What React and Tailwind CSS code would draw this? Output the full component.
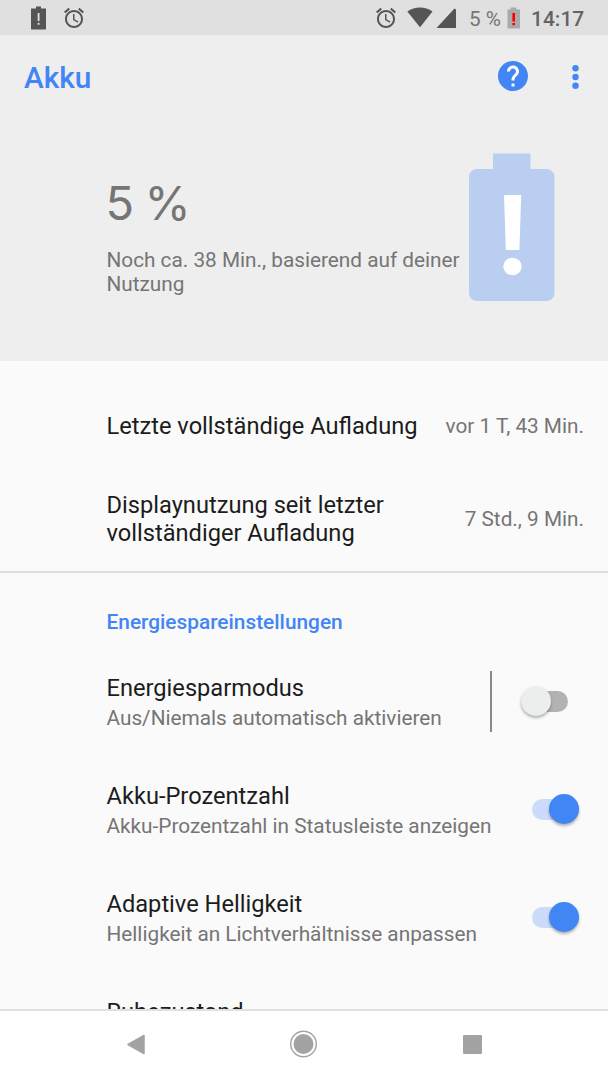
import React, { useState } from "react";

const AlarmIcon = () => (
  <svg className="size-6 shrink-0" viewBox="0 0 24 24" fill="#555555">
    <path d="M22 5.72l-4.6-3.86-1.29 1.53 4.6 3.86L22 5.72zM7.88 3.39L6.6 1.86 2 5.71l1.29 1.53 4.59-3.85zM12.5 8H11v6l4.75 2.85.75-1.23-4-2.37V8zM12 4c-4.97 0-9 4.03-9 9s4.02 9 9 9c4.97 0 9-4.03 9-9s-4.03-9-9-9zm0 16c-3.87 0-7-3.13-7-7s3.13-7 7-7 7 3.13 7 7-3.13 7-7 7z" />
  </svg>
);

function StatusBar() {
  return (
    <div className="h-[35px] shrink-0 bg-[#e0e0e0] flex items-center pl-[31px] pr-6">
      <svg className="w-[15px] h-6 shrink-0" viewBox="0 0 15 24">
        <path d="M5 0.5h5v2h5v21H0v-21h5z" fill="#555555" />
        <path d="M6.7 7h1.8v8H6.7zM6.7 16.8h1.8v2H6.7z" fill="#e0e0e0" />
      </svg>
      <div className="ml-4 flex">
        <AlarmIcon />
      </div>
      <div className="ml-auto flex items-center">
        <AlarmIcon />
        <svg className="ml-[9px] w-[26px] h-[21px]" viewBox="0 0 26 21">
          <path d="M0.3 4.6C7.5-1 18.5-1 25.5 4.6L13 20.3z" fill="#555555" />
        </svg>
        <svg className="ml-[3px] w-5 h-5" viewBox="0 0 20 20">
          <path d="M18.5 0.6L20 1.5V20H0.5z" fill="#555555" />
        </svg>
        <span className="ml-[13px] w-[33px] whitespace-nowrap text-[20.7px] leading-6 text-[#757575] mt-0.5">
          5 %
        </span>
        <svg className="ml-[5px] w-[13px] h-[22px]" viewBox="0 0 13 22">
          <path d="M3.5 0.5h6v2H13v19H0.5v-19h3z" fill="#aaaaaa" />
          <path d="M5.4 6h2.6v8.5H5.4zM5.4 15.9h2.6v2.4H5.4z" fill="#ff0000" />
        </svg>
        <span className="ml-[11px] w-[53px] whitespace-nowrap text-[21px] leading-6 font-medium text-[#636363] mt-0.5">
          14:17
        </span>
      </div>
    </div>
  );
}

function AppBar() {
  return (
    <div className="h-[85px] flex items-center pl-6 pr-[29px]">
      <h1 className="text-[29.8px] leading-[35px] font-medium text-[#4285f4] -mt-px">Akku</h1>
      <button className="ml-auto" aria-label="Hilfe">
        <svg className="block size-9 -mt-[3px]" viewBox="0 0 24 24" fill="#4285f4">
          <circle cx="12" cy="12" r="9" fill="#ffffff" />
          <path d="M12 2C6.48 2 2 6.48 2 12s4.48 10 10 10 10-4.48 10-10S17.52 2 12 2zm1 17h-2v-2h2v2zm2.07-7.75l-.9.92C13.45 12.9 13 13.5 13 15h-2v-.5c0-1.1.45-2.1 1.17-2.83l1.24-1.26c.37-.36.59-.86.59-1.41 0-1.1-.9-2-2-2s-2 .9-2 2H8c0-2.21 1.79-4 4-4s4 1.79 4 4c0 .88-.36 1.68-.93 2.25z" />
        </svg>
      </button>
      <button className="ml-[41px]" aria-label="Mehr">
        <svg className="block w-[7px] h-6 -mt-px" viewBox="0 0 7 24" fill="#4285f4">
          <circle cx="3.5" cy="3.2" r="3.2" />
          <circle cx="3.5" cy="12" r="3.2" />
          <circle cx="3.5" cy="20.8" r="3.2" />
        </svg>
      </button>
    </div>
  );
}

function BatterySummary() {
  return (
    <div className="h-[241px] flex pl-[106.5px] text-[#757575]">
      <div className="w-[361.5px] pt-[55px]">
        <p className="font-[Inter,sans-serif] text-[47px] leading-[56px] tracking-[-1.4px] -ml-px">5 %</p>
        <p className="mt-[17px] text-[20.78px] leading-[24.3px]">
          Noch ca. 38 Min., basierend auf deiner Nutzung
        </p>
      </div>
      <svg className="mt-[33px] w-[87px] h-[149px]" viewBox="0 0 87 149">
        <path
          d="M25 0.5h37.5v15.5H78.5a8 8 0 0 1 8 8V140a8 8 0 0 1-8 8H9a8 8 0 0 1-8-8V24a8 8 0 0 1 8-8H25z"
          fill="#b9cef0"
        />
        <path d="M36 42h17.2l-1.8 55H37.8z" fill="#ffffff" />
        <ellipse cx="44.5" cy="113.5" rx="9.2" ry="8.7" fill="#ffffff" />
      </svg>
    </div>
  );
}

function InfoRow({ title, value, className }) {
  return (
    <div className={`flex items-center justify-between pl-[106.5px] pr-6 ${className}`}>
      <p className="max-w-[320px] pt-0.5 text-[23.65px] leading-[27.7px] text-[#1c1c1c]">{title}</p>
      <p className="whitespace-nowrap text-[20.78px] leading-[24.3px] text-[#757575]">{value}</p>
    </div>
  );
}

function Switch({ checked, onClick }) {
  return (
    <button
      role="switch"
      aria-checked={checked}
      onClick={onClick}
      className={`flex items-center w-[47px] h-[21px] -mt-px rounded-full ${
        checked ? "justify-end bg-[#cbdbf9]" : "bg-[#b2b2b2]"
      }`}
    >
      <span
        className={`size-[30px] shrink-0 rounded-full shadow-[0_2px_3px_rgba(0,0,0,0.3)] ${
          checked ? "bg-[#4285f4]" : "bg-[#eceeed]"
        }`}
      />
    </button>
  );
}

function SettingRow({ item, onToggle }) {
  return (
    <div className="h-[108px] shrink-0 flex items-center pl-[106.5px]">
      <div className="whitespace-nowrap">
        <p className="pt-px text-[23.65px] leading-[27.7px] text-[#1c1c1c]">{item.title}</p>
        <p className="mt-[3.5px] text-[20.78px] leading-[24.3px] text-[#757575]">{item.summary}</p>
      </div>
      <div className={`ml-auto -mt-px flex items-center ${item.divided ? "pr-[40.5px]" : "pr-[29px]"}`}>
        {item.divided && <div className="w-[1.5px] h-[61px] mr-[29px] bg-[#8a8a8a]" />}
        {item.hasSwitch && <Switch checked={item.checked} onClick={onToggle} />}
      </div>
    </div>
  );
}

function NavBar() {
  return (
    <div className="h-[71px] shrink-0 flex items-center justify-between border-t-2 border-[#e0e0e0] bg-white pl-[126px] pr-[126.5px] pb-[3px]">
      <svg className="w-5 h-[21px]" viewBox="0 0 20 21">
        <path d="M18 1.5v18L2 10.5z" fill="#a3a3a3" stroke="#a3a3a3" strokeWidth="1.5" strokeLinejoin="round" />
      </svg>
      <svg className="size-7" viewBox="0 0 28 28">
        <circle cx="13.5" cy="14" r="12.8" fill="none" stroke="#a3a3a3" strokeWidth="1.4" />
        <circle cx="13.5" cy="14" r="10" fill="#a3a3a3" />
      </svg>
      <div className="size-[19px] rounded-[1px] bg-[#a3a3a3]" />
    </div>
  );
}

function App() {
  const [settings, setSettings] = useState([
    {
      title: "Energiesparmodus",
      summary: "Aus/Niemals automatisch aktivieren",
      checked: false,
      hasSwitch: true,
      divided: true,
    },
    {
      title: "Akku-Prozentzahl",
      summary: "Akku-Prozentzahl in Statusleiste anzeigen",
      checked: true,
      hasSwitch: true,
    },
    {
      title: "Adaptive Helligkeit",
      summary: "Helligkeit an Lichtverhältnisse anpassen",
      checked: true,
      hasSwitch: true,
    },
    { title: "Ruhezustand", summary: "\u00a0" },
  ]);

  const handleToggle = (index) => {
    setSettings(
      settings.map((item, i) => (i === index ? { ...item, checked: !item.checked } : item))
    );
  };

  return (
    <div className="w-[608px] h-[1080px] overflow-hidden flex flex-col bg-[#fafafa] font-[Roboto,sans-serif]">
      <StatusBar />
      <div className="shrink-0 bg-[#eeeeee]">
        <AppBar />
        <BatterySummary />
      </div>

      <div className="flex-1 min-h-0 overflow-hidden flex flex-col">
        <div className="shrink-0 py-3 border-b-2 border-[#dddddd]">
          <InfoRow title="Letzte vollständige Aufladung" value="vor 1 T, 43 Min." className="h-[106px]" />
          <InfoRow
            title="Displaynutzung seit letzter vollständiger Aufladung"
            value="7 Std., 9 Min."
            className="h-[80px]"
          />
        </div>

        <h2 className="h-[75px] shrink-0 flex items-center pt-6 pl-[106.5px] text-[20.85px] leading-[24.3px] font-medium text-[#4285f4]">
          Energiespareinstellungen
        </h2>
        {settings.map((item, index) => (
          <SettingRow key={index} item={item} onToggle={() => handleToggle(index)} />
        ))}
      </div>

      <NavBar />
    </div>
  );
}

export default App;
